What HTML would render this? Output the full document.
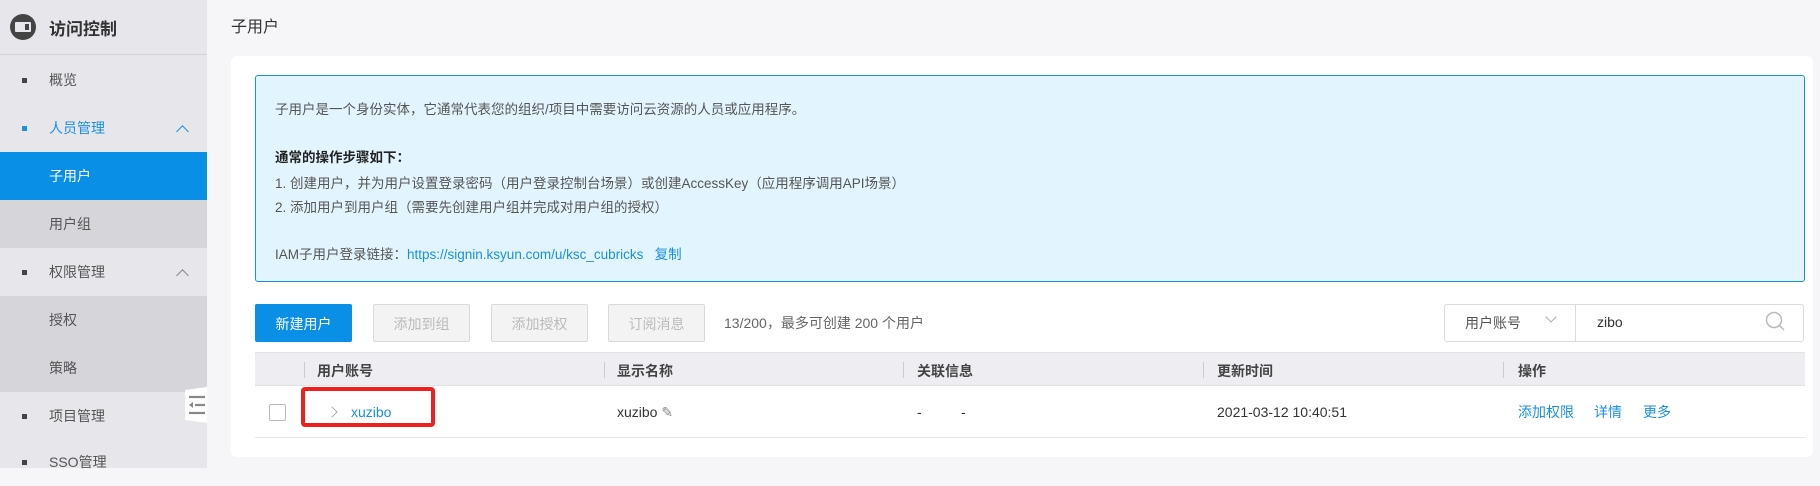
<!DOCTYPE html>
<html><head><meta charset="utf-8"><style>
*{margin:0;padding:0;box-sizing:border-box}
body{width:1820px;height:468px;overflow:hidden;background:#f6f6f8;font-family:"Liberation Sans","Noto Sans CJK SC",sans-serif;font-size:14px;color:#333;position:relative}
.side{position:absolute;left:0;top:0;width:207px;height:468px;background:#e7e6ea}
.logo{height:55px;border-bottom:1px solid #d2d2d6;display:flex;align-items:center;padding-left:10px;font-size:17px;font-weight:bold;color:#333}
.logo .ic{width:26px;height:26px;border-radius:50%;background:#444;margin-right:13px;position:relative}
.logo .ic:after{content:"";position:absolute;left:5px;top:8px;width:16px;height:10px;background:#e7e6ea;border-radius:1px}
.logo .ic:before{content:"";position:absolute;left:15px;top:10px;width:4px;height:6px;background:#444;z-index:1}
.mi{position:absolute;left:0;width:207px;height:48px;line-height:48px;padding-left:49px;font-size:14px;color:#555}
.mi .d{position:absolute;left:22px;top:22px;width:5px;height:5px;background:#444}
.mi .ar{position:absolute;left:178px;top:20px;width:9px;height:9px;border-left:1px solid #888;border-top:1px solid #888;transform:rotate(45deg)}
.sub{background:#d6d5da}
.act{background:#0a8fe6;color:#fff}
.main h1{position:absolute;left:231px;top:13px;font-size:16px;font-weight:normal;color:#333}
.card{position:absolute;left:231px;top:56px;width:1582px;height:401px;background:#fff;border-radius:6px}
.info{position:absolute;left:255px;top:75px;width:1550px;height:207px;background:#e2f5fe;border:1px solid #1a91e0;border-radius:3px}
.info p{position:absolute;left:19px;font-size:13.5px;color:#555;white-space:nowrap}
.blue{color:#1a8fe3}
.btn{position:absolute;top:304px;height:38px;line-height:38px;width:97px;text-align:center;border:1px solid #d9d9d9;border-radius:2px;background:#f3f3f3;color:#bbb;font-size:14px}
.th{position:absolute;left:255px;top:352px;width:1550px;height:34px;background:#eeedf1;border-top:1px solid #e2e2e2;border-bottom:1px solid #e2e2e2}
.th span{position:absolute;top:8px;font-size:14px;font-weight:bold;color:#444}
.th i{position:absolute;top:9px;width:1px;height:16px;background:#ccc}
.row{position:absolute;left:255px;top:386px;width:1550px;height:52px;border-bottom:1px solid #e6e6e6}
.t{position:absolute;top:388px;line-height:48px;font-size:14px;color:#333;white-space:nowrap}
.t.blue{color:#1a8fe3}
</style></head><body>
<div class="side">
<div class="logo"><div class="ic"></div>访问控制</div>
<div class="mi" style="top:56px"><span class="d"></span>概览</div>
<div class="mi" style="top:104px;color:#1a8fe3"><span class="d" style="background:#1a8fe3"></span>人员管理<span class="ar" style="border-color:#1a8fe3;top:23px"></span></div>
<div class="mi act" style="top:152px">子用户</div>
<div class="mi sub" style="top:200px">用户组</div>
<div class="mi" style="top:248px"><span class="d"></span>权限管理<span class="ar" style="top:23px"></span></div>
<div class="mi sub" style="top:296px">授权</div>
<div class="mi sub" style="top:344px">策略</div>
<div class="mi" style="top:392px"><span class="d"></span>项目管理</div>
<div class="mi" style="top:438px"><span class="d"></span>SSO管理</div>
</div>
<svg style="position:absolute;left:185px;top:387px" width="22" height="36"><polygon points="0,3 22,0 22,36 0,33" fill="#fff"/><g stroke="#888" stroke-width="2.2"><line x1="4" y1="10" x2="20" y2="10"/><line x1="10" y1="18" x2="20" y2="18"/><line x1="4" y1="26" x2="20" y2="26"/></g><polygon points="8,15 8,21 4,18" fill="#888"/></svg>
<div class="main"><h1>子用户</h1></div>
<div class="card"></div>
<div class="info">
<p style="top:22px">子用户是一个身份实体，它通常代表您的组织/项目中需要访问云资源的人员或应用程序。</p>
<p style="top:70px;font-weight:bold;color:#222">通常的操作步骤如下：</p>
<p style="top:96px">1. 创建用户，并为用户设置登录密码（用户登录控制台场景）或创建AccessKey（应用程序调用API场景）</p>
<p style="top:120px">2. 添加用户到用户组（需要先创建用户组并完成对用户组的授权）</p>
<p style="top:167px">IAM子用户登录链接：<span class="blue">https://signin.ksyun.com/u/ksc_cubricks</span>&nbsp;&nbsp;&nbsp;<span class="blue">复制</span></p>
</div>
<div class="btn" style="left:255px;background:#0a8fe6;border-color:#0a8fe6;color:#fff">新建用户</div>
<div class="btn" style="left:373px">添加到组</div>
<div class="btn" style="left:491px">添加授权</div>
<div class="btn" style="left:608px">订阅消息</div>
<div style="position:absolute;left:724px;top:313px;color:#666;font-size:14px">13/200，最多可创建 200 个用户</div>
<div style="position:absolute;left:1444px;top:304px;width:360px;height:38px;border:1px solid #dcdcdc;border-radius:3px"></div>
<div style="position:absolute;left:1575px;top:305px;width:1px;height:36px;background:#dcdcdc"></div>
<div style="position:absolute;left:1465px;top:313px;color:#555">用户账号</div>
<div style="position:absolute;left:1547px;top:313px;width:8px;height:8px;border-right:1px solid #aaa;border-bottom:1px solid #aaa;transform:rotate(45deg)"></div>
<div style="position:absolute;left:1597px;top:314px;color:#333">zibo</div>
<svg style="position:absolute;left:1765px;top:311px" width="22" height="22"><circle cx="9" cy="9" r="7.5" stroke="#bbb" stroke-width="1.5" fill="none"/><line x1="14.5" y1="14.5" x2="19" y2="19" stroke="#bbb" stroke-width="1.5"/></svg>
<div class="th">
<i style="left:49px"></i><span style="left:62px">用户账号</span>
<i style="left:349px"></i><span style="left:362px">显示名称</span>
<i style="left:648px"></i><span style="left:662px">关联信息</span>
<i style="left:948px"></i><span style="left:962px">更新时间</span>
<i style="left:1248px"></i><span style="left:1263px">操作</span>
</div>
<div class="row"></div>
<div style="position:absolute;left:269px;top:404px;width:17px;height:17px;border:1px solid #bbb;border-radius:2px;background:#fff"></div>
<div style="position:absolute;left:301px;top:387px;width:134px;height:40px;border:4px solid #f01f1f;border-radius:4px"></div>
<div style="position:absolute;left:328px;top:408px;width:8px;height:8px;border-right:1px solid #aaa;border-top:1px solid #aaa;transform:rotate(45deg)"></div>
<div class="t blue" style="left:351px">xuzibo</div>
<div class="t" style="left:617px">xuzibo <span style="color:#888">✎</span></div>
<div class="t" style="left:917px">-</div><div class="t" style="left:961px">-</div>
<div class="t" style="left:1217px">2021-03-12 10:40:51</div>
<div class="t blue" style="left:1518px">添加权限</div>
<div class="t blue" style="left:1594px">详情</div>
<div class="t blue" style="left:1643px">更多</div>
</body></html>
